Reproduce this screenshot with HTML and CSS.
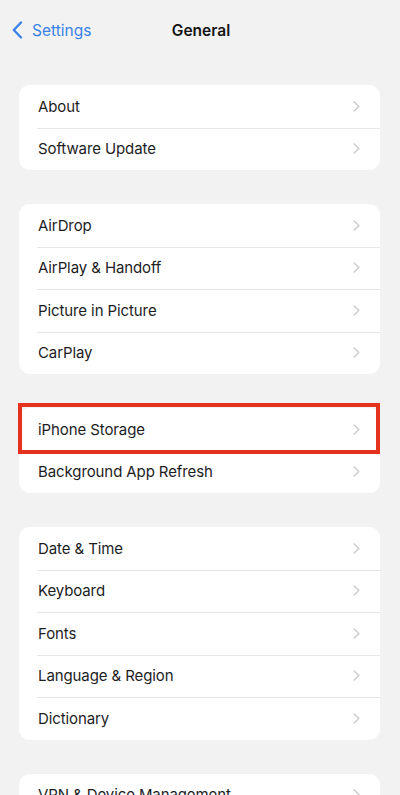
FILE: index.html
```html
<!DOCTYPE html>
<html lang="en">
<head>
<meta charset="utf-8">
<title>General</title>
<link rel="stylesheet" href="styles.css">
</head>
<body>
<header class="nav">
  <a class="back" href="#">
    <svg class="back-icon" width="11" height="18" viewBox="0 0 11 18"><path d="M9 1.5 L1.8 9 L9 16.5" fill="none" stroke="#3a82e6" stroke-width="2.4" stroke-linecap="round" stroke-linejoin="round"/></svg>
    <span>Settings</span>
  </a>
  <h1 class="title">General</h1>
  <span></span>
</header>
<main class="list">
  <section class="card">
    <div class="row"><span>About</span><svg class="chev" width="7" height="11" viewBox="0 0 7 11"><path d="M1.2 1 L5.8 5.5 L1.2 10" /></svg></div>
    <div class="row"><span>Software Update</span><svg class="chev" width="7" height="11" viewBox="0 0 7 11"><path d="M1.2 1 L5.8 5.5 L1.2 10" /></svg></div>
  </section>
  <section class="card">
    <div class="row"><span>AirDrop</span><svg class="chev" width="7" height="11" viewBox="0 0 7 11"><path d="M1.2 1 L5.8 5.5 L1.2 10" /></svg></div>
    <div class="row"><span>AirPlay &amp; Handoff</span><svg class="chev" width="7" height="11" viewBox="0 0 7 11"><path d="M1.2 1 L5.8 5.5 L1.2 10" /></svg></div>
    <div class="row"><span>Picture in Picture</span><svg class="chev" width="7" height="11" viewBox="0 0 7 11"><path d="M1.2 1 L5.8 5.5 L1.2 10" /></svg></div>
    <div class="row"><span>CarPlay</span><svg class="chev" width="7" height="11" viewBox="0 0 7 11"><path d="M1.2 1 L5.8 5.5 L1.2 10" /></svg></div>
  </section>
  <section class="card">
    <div class="row highlighted"><span>iPhone Storage</span><svg class="chev" width="7" height="11" viewBox="0 0 7 11"><path d="M1.2 1 L5.8 5.5 L1.2 10" /></svg></div>
    <div class="row"><span>Background App Refresh</span><svg class="chev" width="7" height="11" viewBox="0 0 7 11"><path d="M1.2 1 L5.8 5.5 L1.2 10" /></svg></div>
  </section>
  <section class="card">
    <div class="row"><span>Date &amp; Time</span><svg class="chev" width="7" height="11" viewBox="0 0 7 11"><path d="M1.2 1 L5.8 5.5 L1.2 10" /></svg></div>
    <div class="row"><span>Keyboard</span><svg class="chev" width="7" height="11" viewBox="0 0 7 11"><path d="M1.2 1 L5.8 5.5 L1.2 10" /></svg></div>
    <div class="row"><span>Fonts</span><svg class="chev" width="7" height="11" viewBox="0 0 7 11"><path d="M1.2 1 L5.8 5.5 L1.2 10" /></svg></div>
    <div class="row"><span>Language &amp; Region</span><svg class="chev" width="7" height="11" viewBox="0 0 7 11"><path d="M1.2 1 L5.8 5.5 L1.2 10" /></svg></div>
    <div class="row"><span>Dictionary</span><svg class="chev" width="7" height="11" viewBox="0 0 7 11"><path d="M1.2 1 L5.8 5.5 L1.2 10" /></svg></div>
  </section>
  <section class="card">
    <div class="row"><span>VPN &amp; Device Management</span><svg class="chev" width="7" height="11" viewBox="0 0 7 11"><path d="M1.2 1 L5.8 5.5 L1.2 10" /></svg></div>
  </section>
</main>
</body>
</html>
```
FILE: styles.css
```css
* { box-sizing: border-box; }
html, body { margin: 0; padding: 0; }
body {
  background: #f2f2f3;
  font-family: Inter, "Noto Sans", "Liberation Sans", sans-serif;
  color: #1d1d1f;
  width: 400px;
  height: 795px;
  overflow: hidden;
}
.nav {
  height: 60px;
  display: grid;
  grid-template-columns: 1fr auto 1fr;
  align-items: center;
  padding: 0 12px;
}
.back {
  display: flex;
  align-items: center;
  gap: 9px;
  color: #3a82e6;
  text-decoration: none;
  font-size: 15.5px;
}
.back-icon { display: block; }
.title {
  margin: 0;
  font-size: 15.5px;
  font-weight: 600;
  color: #151515;
  padding-left: 2px;
}
.list {
  display: flex;
  flex-direction: column;
  gap: 34px;
  padding: 25px 20px 0 19px;
}
.card {
  background: #ffffff;
  border-radius: 11px;
}
.row {
  position: relative;
  height: 42.5px;
  display: flex;
  align-items: center;
  justify-content: space-between;
  padding: 0 20px 0 19px;
  font-size: 15px;
  letter-spacing: -0.1px;
}
.row + .row::before {
  content: "";
  position: absolute;
  top: 0;
  left: 18px;
  right: 0;
  height: 1px;
  background: #e6e6e8;
}
.chev path {
  fill: none;
  stroke: #cdcdd0;
  stroke-width: 1.5;
  stroke-linecap: round;
  stroke-linejoin: round;
}
.highlighted::after {
  content: "";
  position: absolute;
  top: -5px;
  bottom: -3px;
  left: -1px;
  right: 0;
  border: 4px solid #e5321d;
  z-index: 2;
}
```
